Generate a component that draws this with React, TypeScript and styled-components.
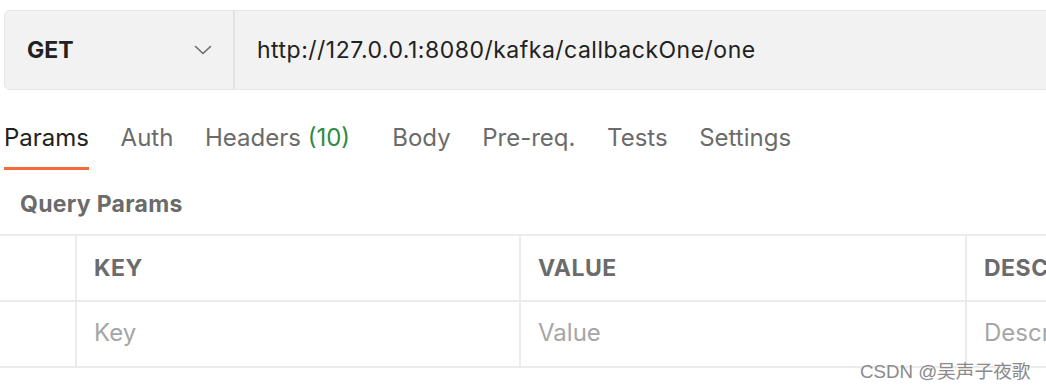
import React from "react";
import styled, { createGlobalStyle } from "styled-components";

const GlobalStyle = createGlobalStyle`
  html, body {
    margin: 0;
    padding: 0;
    background: #ffffff;
    font-family: Inter, "Noto Sans", "Noto Sans CJK SC", sans-serif;
  }
`;

const tabs = [
  { label: "Params", active: true },
  { label: "Auth" },
  { label: "Headers", count: 10 },
  { label: "Body" },
  { label: "Pre-req." },
  { label: "Tests" },
  { label: "Settings" },
];

export default function App() {
  return (
    <>
      <GlobalStyle />
      <StyledPage>
        <UrlBar>
          <MethodSelect>
            <span>GET</span>
            <svg width="18" height="10" viewBox="0 0 18 10" fill="none">
              <path d="M1.5 1.5 L9 8.5 L16.5 1.5" stroke="#6b6b6b" strokeWidth="1.6" strokeLinecap="round" strokeLinejoin="round" />
            </svg>
          </MethodSelect>
          <UrlInput>http://127.0.0.1:8080/kafka/callbackOne/one</UrlInput>
        </UrlBar>

        <TabList>
          {tabs.map((tab) => (
            <Tab key={tab.label} $active={!!tab.active} $wide={tab.count !== undefined}>
              {tab.label}
              {tab.count !== undefined && <Count> ({tab.count})</Count>}
            </Tab>
          ))}
        </TabList>

        <SectionTitle>Query Params</SectionTitle>

        <ParamTable>
          <Cell />
          <HeadCell>KEY</HeadCell>
          <HeadCell>VALUE</HeadCell>
          <HeadCell>DESCRIPTION</HeadCell>
          <Cell />
          <PlaceholderCell>Key</PlaceholderCell>
          <PlaceholderCell>Value</PlaceholderCell>
          <PlaceholderCell>Description</PlaceholderCell>
        </ParamTable>

        <Watermark>CSDN @吴声子夜歌</Watermark>
      </StyledPage>
    </>
  );
}

const StyledPage = styled.div`
  position: relative;
  width: 1046px;
  height: 388px;
  overflow: hidden;
  padding-top: 10px;
  box-sizing: border-box;
`;

const UrlBar = styled.div`
  display: flex;
  height: 80px;
  margin-left: 4px;
  margin-right: -20px;
  background: #f2f2f2;
  border: 1.5px solid #e6e6e6;
  border-radius: 6px;
  box-sizing: border-box;
`;

const MethodSelect = styled.div`
  display: flex;
  align-items: center;
  justify-content: space-between;
  width: 230px;
  padding: 0 21px 0 22px;
  box-sizing: border-box;
  border-right: 2px solid #e3e3e3;
  font-size: 23px;
  font-weight: 700;
  color: #212121;
`;

const UrlInput = styled.div`
  display: flex;
  align-items: center;
  padding-left: 22px;
  font-size: 23px;
  letter-spacing: 0.5px;
  color: #212121;
`;

const TabList = styled.div`
  display: flex;
  gap: 31.6px;
  height: 80px;
  padding-left: 4px;
`;

const Tab = styled.div<{ $active: boolean; $wide: boolean }>`
  display: flex;
  align-items: center;
  height: 100%;
  box-sizing: border-box;
  padding-top: 18px;
  margin-right: ${({ $wide }) => ($wide ? "10.5px" : "0")};
  font-size: 24px;
  color: ${({ $active }) => ($active ? "#212121" : "#6b6b6b")};
  border-bottom: 3px solid ${({ $active }) => ($active ? "#f26b3a" : "transparent")};
  white-space: pre;
`;

const Count = styled.span`
  color: #2f8a3d;
`;

const SectionTitle = styled.div`
  height: 64px;
  box-sizing: border-box;
  padding: 4px 0 0 20px;
  display: flex;
  align-items: center;
  font-size: 23px;
  font-weight: 700;
  letter-spacing: 0.3px;
  color: #6b6b6b;
`;

const ParamTable = styled.div`
  display: grid;
  grid-template-columns: 77px 444px 446px 200px;
  grid-auto-rows: 66px;
  border-top: 2px solid #ebebeb;
`;

const Cell = styled.div`
  display: flex;
  align-items: center;
  padding-left: 17px;
  border-bottom: 2px solid #ebebeb;
  border-right: 2px solid #ebebeb;
  box-sizing: border-box;
  white-space: nowrap;
  overflow: hidden;
`;

const HeadCell = styled(Cell)`
  font-size: 23px;
  font-weight: 700;
  letter-spacing: 0.5px;
  color: #6b6b6b;
`;

const PlaceholderCell = styled(Cell)`
  padding-bottom: 4px;
  font-size: 24px;
  color: #a6a6a6;
`;

const Watermark = styled.div`
  position: absolute;
  left: 860px;
  top: 356px;
  font-size: 18.7px;
  color: #8a8a8a;
  font-family: "Liberation Sans", "Noto Sans CJK SC", sans-serif;
  text-shadow: 0 0 2px #ffffff;
`;
